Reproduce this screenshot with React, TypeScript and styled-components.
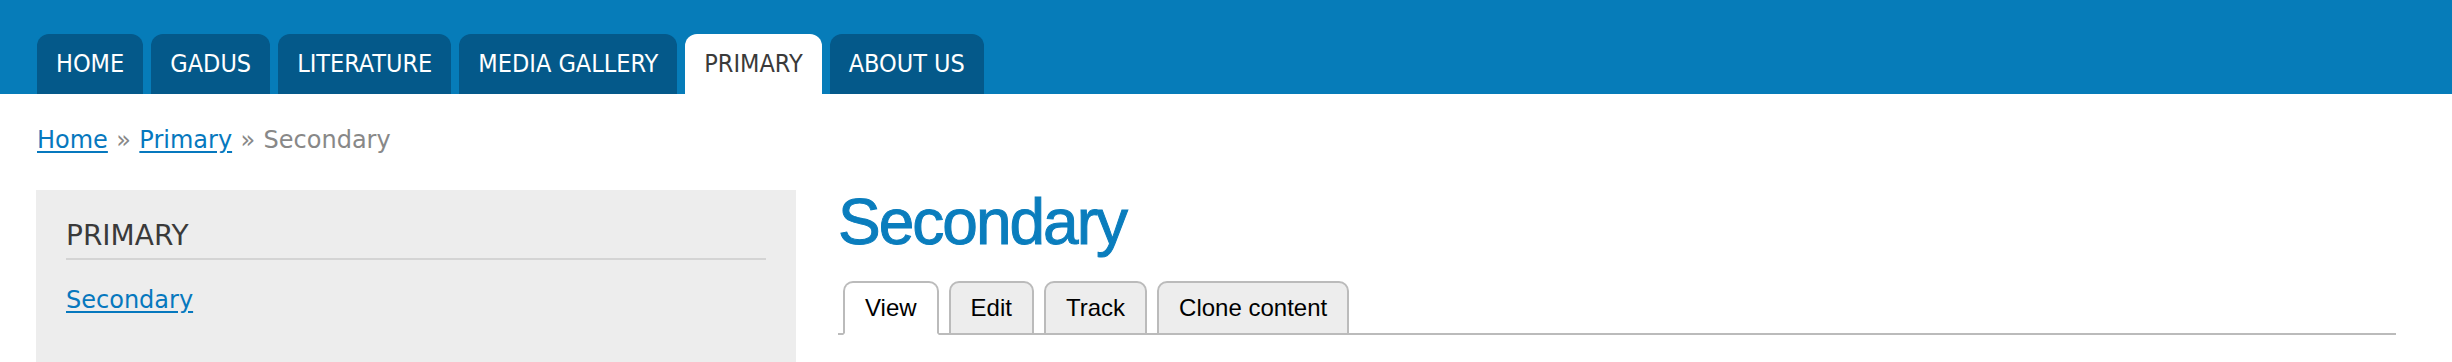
import React from "react";
import styled, { createGlobalStyle } from "styled-components";

const GlobalStyle = createGlobalStyle`
  html, body {
    margin: 0;
    padding: 0;
    background: #ffffff;
  }
  body {
    font-family: "DejaVu Sans", Verdana, sans-serif;
  }
`;

const mainMenu = ["HOME", "GADUS", "LITERATURE", "MEDIA GALLERY", "PRIMARY", "ABOUT US"];
const localTabs = ["View", "Edit", "Track", "Clone content"];

const App: React.FC = () => {
  return (
    <Page>
      <GlobalStyle />
      <Header>
        <MainMenu>
          {mainMenu.map((item) => (
            <MenuTab key={item} active={item === "PRIMARY"}>
              {item}
            </MenuTab>
          ))}
        </MainMenu>
      </Header>

      <Breadcrumb>
        <CrumbLink href="#">Home</CrumbLink>
        <Sep>»</Sep>
        <CrumbLink href="#">Primary</CrumbLink>
        <Sep>»</Sep>
        <Current>Secondary</Current>
      </Breadcrumb>

      <Columns>
        <Sidebar>
          <BlockTitle>PRIMARY</BlockTitle>
          <BlockLink href="#">Secondary</BlockLink>
        </Sidebar>

        <Main>
          <Title>Secondary</Title>
          <Tabs>
            {localTabs.map((tab) => (
              <Tab key={tab} active={tab === "View"}>
                {tab}
              </Tab>
            ))}
          </Tabs>
        </Main>
      </Columns>
    </Page>
  );
};

export default App;

const Page = styled.div`
  min-height: 362px;
  overflow: hidden;
`;

const Header = styled.header`
  background: #067cb9;
  height: 94px;
  display: flex;
  align-items: flex-end;
`;

const MainMenu = styled.nav`
  display: flex;
  gap: 8px;
  margin-left: 37px;
`;

const MenuTab = styled.a<{ active?: boolean }>`
  display: block;
  height: 60px;
  line-height: 60px;
  padding: 0 19px;
  border-radius: 12px 12px 0 0;
  background: ${(props) => (props.active ? "#ffffff" : "#04598a")};
  color: ${(props) => (props.active ? "#3a3a3a" : "#ffffff")};
  font-family: "DejaVu Sans Condensed", "DejaVu Sans", sans-serif;
  font-stretch: condensed;
  font-size: 25px;
  white-space: nowrap;
  cursor: pointer;
`;

const Breadcrumb = styled.div`
  margin: 28px 0 0 37px;
  font-size: 24px;
  line-height: 36px;
  height: 36px;
  color: #888888;
`;

const CrumbLink = styled.a`
  color: #0678be;
  text-decoration: underline;
  text-underline-offset: 3px;
`;

const Sep = styled.span`
  margin: 0 0.35em;
  color: #888888;
`;

const Current = styled.span`
  color: #888888;
`;

const Columns = styled.div`
  display: flex;
  gap: 42px;
  margin: 32px 56px 0 36px;
`;

const Sidebar = styled.aside`
  width: 760px;
  flex: none;
  box-sizing: border-box;
  background: #ededed;
  padding: 29px 30px 60px;
  min-height: 200px;
`;

const BlockTitle = styled.h2`
  margin: 0;
  padding-bottom: 5px;
  border-bottom: 2px solid #d4d4d4;
  font-size: 28px;
  line-height: 1.2;
  font-weight: normal;
  color: #3a3a3a;
`;

const BlockLink = styled.a`
  display: inline-block;
  margin-top: 22px;
  font-size: 24px;
  line-height: 36px;
  color: #0678be;
  text-decoration: underline;
  text-underline-offset: 3px;
`;

const Main = styled.main`
  flex: 1;
  min-width: 0;
`;

const Title = styled.h1`
  margin: 0 0 27px 0;
  font-family: "Liberation Sans", Arial, Helvetica, sans-serif;
  font-size: 64px;
  line-height: 1;
  font-weight: normal;
  letter-spacing: -2px;
  color: #0a7dbd;
  -webkit-text-stroke: 1px #0a7dbd;
`;

const Tabs = styled.ul`
  display: flex;
  gap: 10px;
  margin: 0;
  padding: 0 0 0 5px;
  list-style: none;
  border-bottom: 2px solid #bbbbbb;
`;

const Tab = styled.li<{ active?: boolean }>`
  margin-bottom: -2px;
  padding: 0 20px;
  height: 50px;
  line-height: 50px;
  border: 2px solid #bbbbbb;
  border-bottom-color: ${(props) => (props.active ? "#ffffff" : "#bbbbbb")};
  border-radius: 10px 10px 0 0;
  background: ${(props) => (props.active ? "#ffffff" : "#ededed")};
  font-family: "Liberation Sans", Arial, Helvetica, sans-serif;
  font-size: 24px;
  color: #000000;
  cursor: pointer;
`;
